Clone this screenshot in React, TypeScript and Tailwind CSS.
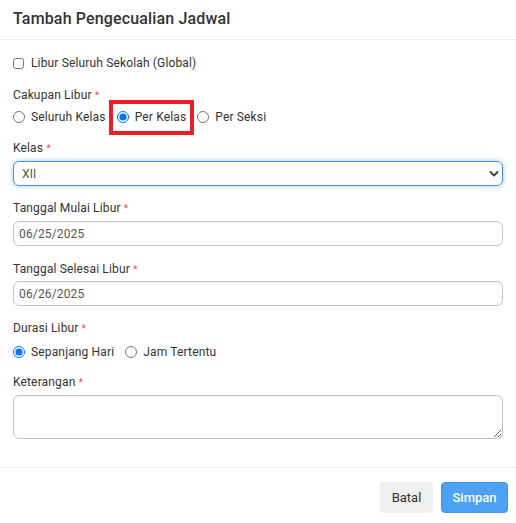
import React from 'react';

const Req: React.FC = () => <span className="ml-[3px] text-[10px] text-[#e8505b]">*</span>;

const Label: React.FC<{ text: string; className?: string }> = ({ text, className = '' }) => (
  <div className={`h-[18px] leading-[18px] text-[12px] tracking-[0.15px] text-[#333] ${className}`}>
    {text}
    <Req />
  </div>
);

const Radio: React.FC<{ label: string; checked?: boolean; name: string }> = ({ label, checked, name }) => (
  <label className="flex items-center gap-[6px]">
    <input
      type="radio"
      name={name}
      defaultChecked={checked}
      className="m-0 h-[12px] w-[12px] accent-[#0075ff]"
    />
    <span>{label}</span>
  </label>
);

export default function App() {
  return (
    <div className="relative w-[516px] h-[523px] bg-white text-[#333] font-['Roboto','Liberation_Sans',sans-serif]">
      {/* header */}
      <div className="h-[40px] border-b border-[#ececec] px-[13px] flex items-center">
        <h2 className="text-[16px] tracking-[0.15px] font-medium text-[#333] leading-none pb-[2px]">Tambah Pengecualian Jadwal</h2>
      </div>

      {/* body */}
      <div className="px-[13px] pt-[14px] text-[12px] tracking-[0.15px]">
        <label className="flex items-center gap-[7px] h-[18px]">
          <input type="checkbox" className="m-0 h-[11px] w-[11px]" />
          <span>Libur Seluruh Sekolah (Global)</span>
        </label>

        <Label text="Cakupan Libur" className="mt-[14px]" />
        <div className="mt-[4px] h-[18px] flex items-center gap-[11px]">
          <Radio name="cakupan" label="Seluruh Kelas" />
          <Radio name="cakupan" label="Per Kelas" checked />
          <Radio name="cakupan" label="Per Seksi" />
        </div>

        <Label text="Kelas" className="mt-[13px]" />
        <div className="mt-[4px] relative h-[25px] rounded-[6px] border border-[#4a90e2] shadow-[0_0_4px_1px_rgba(74,144,226,0.35)] flex items-center pl-[8px] pr-[3px]">
          <span className="flex-1 text-[12px] text-[#555]">XII</span>
          <svg width="10" height="8" viewBox="0 0 10 8">
            <path d="M1.5 2 L5 5.5 L8.5 2" fill="none" stroke="#444" strokeWidth="2" strokeLinecap="round" strokeLinejoin="round" />
          </svg>
        </div>

        <Label text="Tanggal Mulai Libur" className="mt-[13px]" />
        <input
          readOnly
          value="06/25/2025"
          className="mt-[4px] block w-full h-[25px] rounded-[6px] border border-[#c4c4c4] shadow-[inset_0_1px_1px_rgba(0,0,0,0.06)] px-[5px] text-[12px] text-[#555] outline-none"
        />

        <Label text="Tanggal Selesai Libur" className="mt-[14px]" />
        <input
          readOnly
          value="06/26/2025"
          className="mt-[3px] block w-full h-[25px] rounded-[6px] border border-[#c4c4c4] shadow-[inset_0_1px_1px_rgba(0,0,0,0.06)] px-[5px] text-[12px] text-[#555] outline-none"
        />

        <Label text="Durasi Libur" className="mt-[13px]" />
        <div className="mt-[6px] h-[18px] flex items-center gap-[11px]">
          <Radio name="durasi" label="Sepanjang Hari" checked />
          <Radio name="durasi" label="Jam Tertentu" />
        </div>

        <Label text="Keterangan" className="mt-[12px]" />
        <textarea className="mt-[4px] block w-full h-[44px] rounded-[6px] border border-[#c4c4c4] shadow-[inset_0_1px_1px_rgba(0,0,0,0.06)] outline-none" />
      </div>

      {/* footer */}
      <div className="mt-[28px] border-t border-[#ececec] pt-[14px] px-[8px] flex justify-end gap-[8px]">
        <button className="h-[31px] w-[53px] rounded-[4px] bg-[#efefef] text-[13px] text-[#333]">Batal</button>
        <button className="h-[31px] w-[67px] rounded-[4px] bg-[#4ca1f5] border border-[#3f96ec] text-[13px] font-medium text-white">
          Simpan
        </button>
      </div>

      {/* annotation highlight */}
      <div className="absolute left-[109px] top-[100px] w-[85px] h-[35px] border-[4px] border-[#ee1c25] pointer-events-none" />
    </div>
  );
}
